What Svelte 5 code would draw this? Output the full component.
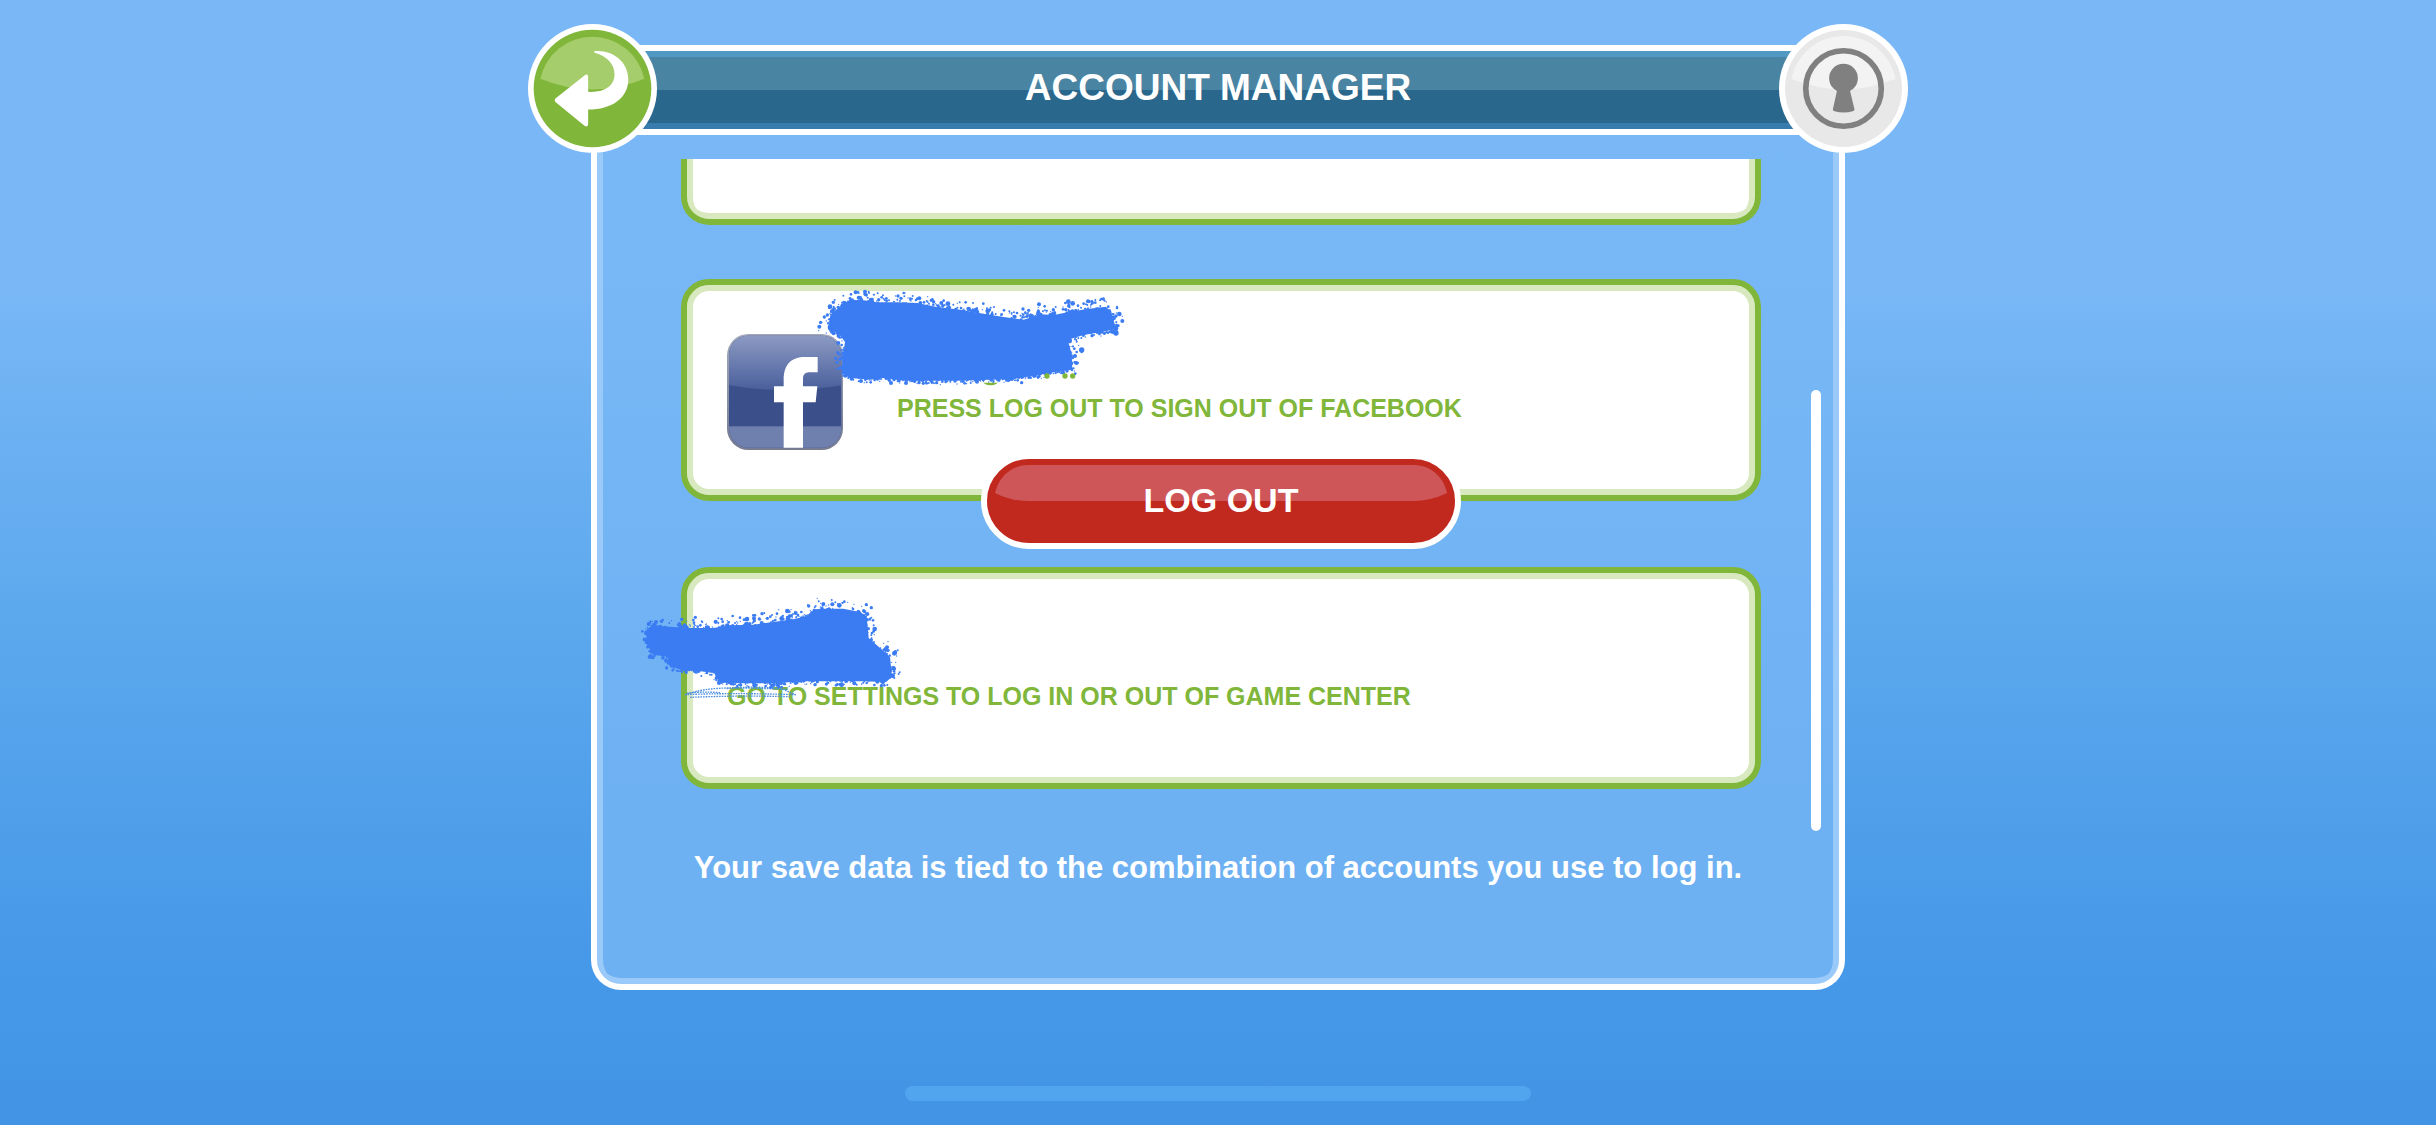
<script>
  // Small seeded generator, so the brush strokes look the same on every load.
  function seeded(seed) {
    let s = seed;
    return () => {
      s = (s * 16807) % 2147483647;
      return s / 2147483647;
    };
  }

  // Turns an outline into a speckled, chalk-like edge.
  function brush(points, seed) {
    const rnd = seeded(seed);
    const specks = [];
    for (let i = 0; i < points.length; i++) {
      const [x1, y1] = points[i];
      const [x2, y2] = points[(i + 1) % points.length];
      const len = Math.hypot(x2 - x1, y2 - y1);
      const upper = x2 > x1;
      const count = Math.ceil(len / (upper ? 2 : 3));
      const spread = upper ? 34 : 14;
      for (let k = 0; k < count; k++) {
        const t = rnd();
        specks.push({
          x: Math.round(x1 + (x2 - x1) * t + (rnd() + rnd() - 1) * spread),
          y: Math.round(y1 + (y2 - y1) * t + (rnd() + rnd() - 1) * spread),
          r: 2 + Math.round(rnd() * rnd() * 6)
        });
      }
    }
    return { outline: points.map((p) => p.join(',')).join(' '), specks };
  }

  const nameMark = brush(
    [
      [474, 178], [480, 134], [504, 112], [532, 92], [570, 88], [620, 96], [680, 96], [740, 98],
      [800, 110], [870, 118], [940, 130], [1000, 140], [1060, 148], [1110, 132], [1150, 134],
      [1200, 124], [1250, 116], [1300, 110], [1322, 120], [1328, 145], [1338, 176], [1290, 186],
      [1240, 194], [1192, 208], [1204, 250], [1206, 298], [1150, 306], [1080, 318], [1030, 326],
      [960, 328], [860, 331], [700, 331], [640, 323], [600, 328], [534, 322], [514, 300],
      [518, 250], [524, 215], [504, 188]
    ],
    77
  );

  const centerMark = brush(
    [
      [48, 210], [64, 196], [120, 198], [180, 202], [250, 202], [300, 194], [370, 192],
      [430, 184], [490, 176], [530, 166], [552, 146], [590, 144], [640, 144], [690, 154],
      [710, 166], [716, 232], [750, 262], [780, 288], [786, 348], [768, 364], [700, 362],
      [600, 362], [520, 362], [430, 368], [340, 368], [270, 366], [256, 338], [200, 330],
      [160, 330], [120, 316], [112, 288], [68, 280], [50, 250]
    ],
    4242
  );
</script>

{#snippet mark(shape)}
  <polygon points={shape.outline} />
  {#each shape.specks as s}
    <circle cx={s.x} cy={s.y} r={s.r} />
  {/each}
{/snippet}

<div class="page">
  <main class="frame">
    <header class="header">
      <button class="round" aria-label="Back">
        <svg viewBox="55 42 386 386" aria-hidden="true">
          <circle cx="248" cy="235" r="193" fill="#fff" />
          <circle cx="248" cy="235" r="176" fill="#80b63a" />
          <path d="M92 206 A159 159 0 0 1 403 206 Q248 270 92 206 Z" fill="#a6cd6b" />
          <path
            d="M255 123 C305 118 355 152 355 208 C355 264 305 298 235 298 V342 C235 348 230 350 225 347 L138 276 Q132 270 138 264 L225 195 Q235 190 235 200 V245 C288 247 314 225 314 193 C314 160 290 138 255 128 Q250 125 255 123 Z"
            fill="#fff"
          />
        </svg>
      </button>
      <div class="bar"><h1>ACCOUNT MANAGER</h1></div>
      <button class="round" aria-label="Privacy">
        <svg viewBox="477 42 386 386" aria-hidden="true">
          <circle cx="670" cy="235" r="193" fill="#fff" />
          <circle cx="670" cy="235" r="175" fill="#e8e8e8" />
          <path d="M514 206 A159 159 0 0 1 826 206 Q670 270 514 206 Z" fill="#f3f3f3" />
          <circle cx="670" cy="235" r="113" fill="none" stroke="#808080" stroke-width="17" />
          <circle cx="670" cy="204" r="43" fill="#808080" />
          <path d="M650 236 V244 L638 298 Q638 302 643 303 Q670 310 698 303 Q703 302 703 298 L690 244 V236 Z" fill="#808080" />
        </svg>
      </button>
    </header>

    <section class="panel">
      <div class="card cut"></div>

      <article class="card first">
        <svg class="logo" viewBox="173 193 348 348" role="img" aria-label="Facebook">
          <defs>
            <linearGradient id="shine" x1="0" y1="0" x2="0" y2="1">
              <stop offset="0" stop-color="#8e9cc4" />
              <stop offset="1" stop-color="#4a5f9c" />
            </linearGradient>
            <linearGradient id="rim" x1="0" y1="0" x2="0" y2="1">
              <stop offset="0" stop-color="#a3a9bb" />
              <stop offset="1" stop-color="#767b92" />
            </linearGradient>
            <clipPath id="tile"><rect x="179" y="198" width="337" height="336" rx="58" /></clipPath>
          </defs>
          <rect x="173" y="193" width="348" height="348" rx="64" fill="url(#rim)" />
          <g clip-path="url(#tile)">
            <rect x="173" y="193" width="348" height="348" fill="#3b4f8a" />
            <path d="M173 193 H521 V346 Q347 376 173 346 Z" fill="url(#shine)" />
            <rect x="173" y="470" width="348" height="71" fill="#6f80ae" />
            <path
              d="M343 541 V398 H314 V350 H343 V332 C343 284 365 262 408 262 H445 V308 H422 C406 308 401 315 401 328 V350 H444 L439 398 H401 V541 Z"
              fill="#fff"
            />
          </g>
        </svg>
        <p>PRESS LOG OUT TO SIGN OUT OF FACEBOOK</p>
        <svg class="mark name" viewBox="440 50 930 310" aria-hidden="true">
          <g fill="#3b7cf3">{@render mark(nameMark)}</g>
          <g fill="#80b63a">
            <path d="M938 337 Q960 353 984 337 Z" />
            <circle cx="1130" cy="317" r="8" />
            <circle cx="1184" cy="317" r="8" />
            <circle cx="1207" cy="317" r="8" />
          </g>
        </svg>
      </article>

      <button class="logout">
        <svg viewBox="0 0 468 84" preserveAspectRatio="none" aria-hidden="true">
          <path d="M8 34 C12 16 26 6 42 6 H426 C442 6 456 16 460 34 Q444 42 426 42 H42 Q24 42 8 34 Z" fill="#cf5658" />
        </svg>
        <span>LOG OUT</span>
      </button>

      <article class="card">
        <p>GO TO SETTINGS TO LOG IN OR OUT OF GAME CENTER</p>
        <svg class="mark center" viewBox="0 100 840 330" aria-hidden="true">
          <g fill="none" stroke="#4f90dd" stroke-width="4" stroke-dasharray="5 3">
            <path d="M165 402 Q220 382 300 382 T470 386" />
            <path d="M165 402 Q300 396 500 402" />
            <path d="M180 410 Q320 404 480 408" />
            <path d="M170 398 Q210 392 270 396" />
            <path d="M290 384 Q380 374 460 386 L495 402" />
          </g>
          <g fill="#3b7cf3">{@render mark(centerMark)}</g>
        </svg>
      </article>

      <p class="note">Your save data is tied to the combination of accounts you use to log in.</p>
      <div class="scroll"></div>
    </section>
  </main>
  <div class="home"></div>
</div>

<style>
  :global(body) {
    margin: 0;
  }

  .page {
    box-sizing: border-box;
    min-height: 100vh;
    padding: 24px 0;
    display: flex;
    flex-direction: column;
    align-items: center;
    justify-content: space-between;
    overflow: hidden;
    font-family: 'Liberation Sans', Arial, sans-serif;
    font-weight: 700;
    background: linear-gradient(#7ab7f7 0%, #79b7f7 26%, #70b3f3 34%, #5faaee 52%, #4f9fea 72%, #4598e8 88%, #4293e4 100%);
  }

  .frame {
    width: 100%;
    max-width: 1380px;
  }

  .header {
    position: relative;
    z-index: 1;
    display: flex;
    align-items: flex-start;
  }

  button {
    margin: 0;
    padding: 0;
    border: 0;
    background: none;
    font: inherit;
    cursor: pointer;
  }

  .round {
    position: relative;
    z-index: 1;
    flex: none;
    width: 129px;
    height: 129px;
    border-radius: 50%;
  }

  .round svg {
    display: block;
    width: 100%;
  }

  .bar {
    box-sizing: border-box;
    flex: 1;
    height: 90px;
    margin: 21px -40px 0;
    padding: 0 0 4px;
    display: flex;
    align-items: center;
    justify-content: center;
    border: solid #fff;
    border-width: 6px 0;
    background: linear-gradient(#5199c3 0 6px, #4a84a3 6px 39px, #2a678d 39px 72px, #387cad 72px);
  }

  h1 {
    margin: 0;
    font-size: 37px;
    line-height: 42px;
    color: #fff;
  }

  .panel {
    position: relative;
    margin: -63px 63px 0;
    padding: 69px 78px 98px 84px;
    display: flex;
    flex-direction: column;
    border: 6px solid #fff;
    border-top: 0;
    border-radius: 0 0 30px 30px;
    background: linear-gradient(#79b7f7 0%, #78b7f6 25%, #72b4f4 50%, #6eb1f3 80%, #6eb1f3 100%);
    box-shadow: inset 0 -6px #99caf9, inset 6px 0 #99caf9, inset -6px 0 #99caf9;
  }

  .card {
    position: relative;
    box-sizing: border-box;
    min-height: 222px;
    padding: 108px 40px 40px;
    display: flex;
    align-items: flex-start;
    border: 6px solid #80b63a;
    border-radius: 28px;
    background: #fff;
    box-shadow: inset 0 0 0 6px #d8e9bf;
  }

  .cut {
    min-height: 66px;
    padding: 0;
    border-top: 0;
    border-radius: 0 0 28px 28px;
    box-shadow: inset 6px 0 #d8e9bf, inset -6px 0 #d8e9bf, inset 0 -6px #d8e9bf;
  }

  .first {
    margin-top: 54px;
    padding-top: 49px;
    gap: 54px;
  }

  .first p {
    padding-top: 59px;
  }

  .logo {
    flex: none;
    width: 116px;
    height: 116px;
  }

  .card p {
    margin: 0;
    font-size: 25px;
    line-height: 30px;
    color: #80b63a;
  }

  .mark {
    position: absolute;
  }

  .name {
    left: 130px;
    top: 2px;
    width: 310px;
  }

  .center {
    left: -57px;
    top: 21px;
    width: 280px;
  }

  .logout {
    position: relative;
    box-sizing: border-box;
    align-self: center;
    width: 480px;
    height: 96px;
    margin: -48px 0 18px;
    padding: 0 0 2px;
    border: 6px solid #fff;
    border-radius: 48px;
    background: #c1281e;
    color: #fff;
    font-size: 34px;
    line-height: 40px;
  }

  .logout svg {
    position: absolute;
    inset: 0;
    width: 100%;
    height: 100%;
  }

  .logout span {
    position: relative;
  }

  .note {
    margin: 61px -78px 0 -84px;
    text-align: center;
    font-size: 31px;
    line-height: 36px;
    color: #fff;
  }

  .scroll {
    position: absolute;
    top: 300px;
    right: 18px;
    width: 10px;
    height: 441px;
    border-radius: 5px;
    background: #fff;
  }

  .home {
    width: 626px;
    max-width: 60%;
    height: 15px;
    border-radius: 8px;
    background: #51a5ef;
  }
</style>
